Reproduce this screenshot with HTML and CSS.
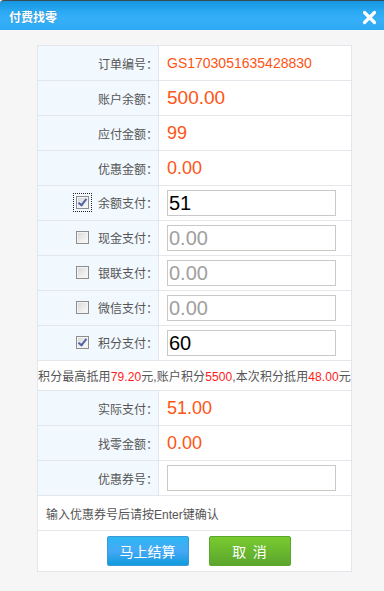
FILE: index.html
```html
<!DOCTYPE html>
<html lang="zh-CN">
<head>
<meta charset="utf-8">
<title>付费找零</title>
<link rel="stylesheet" href="styles.css">
</head>
<body>
<div class="dialog">
  <div class="titlebar">
    <span class="title">付费找零</span>
    <span class="close" aria-label="关闭">
      <svg width="15" height="15" viewBox="0 0 15 15"><path d="M2.5 2.5 L12.5 12.5 M12.5 2.5 L2.5 12.5" stroke="#ffffff" stroke-width="3.2" stroke-linecap="round" fill="none"/></svg>
    </span>
  </div>
  <div class="content">
    <table class="form">
      <colgroup><col class="c-label"><col class="c-value"></colgroup>
      <tr><th>订单编号：</th><td><span class="val v-order">GS1703051635428830</span></td></tr>
      <tr><th>账户余额：</th><td><span class="val v-big">500.00</span></td></tr>
      <tr><th>应付金额：</th><td><span class="val v-mid">99</span></td></tr>
      <tr><th>优惠金额：</th><td><span class="val v-mid">0.00</span></td></tr>
      <tr><th><span class="lab"><span class="cb checked focus"></span>余额支付：</span></th><td><input class="inp" type="text" value="51"></td></tr>
      <tr><th><span class="lab"><span class="cb"></span>现金支付：</span></th><td><input class="inp dim" type="text" value="0.00"></td></tr>
      <tr><th><span class="lab"><span class="cb"></span>银联支付：</span></th><td><input class="inp dim" type="text" value="0.00"></td></tr>
      <tr><th><span class="lab"><span class="cb"></span>微信支付：</span></th><td><input class="inp dim" type="text" value="0.00"></td></tr>
      <tr><th><span class="lab"><span class="cb checked"></span>积分支付：</span></th><td><input class="inp" type="text" value="60"></td></tr>
      <tr class="note-row"><td colspan="2" class="note">积分最高抵用<em>79.20</em>元,账户积分<em>5500</em>,本次积分抵用<em>48.00</em>元</td></tr>
      <tr><th>实际支付：</th><td><span class="val v-mid">51.00</span></td></tr>
      <tr><th>找零金额：</th><td><span class="val v-mid">0.00</span></td></tr>
      <tr><th>优惠券号：</th><td><input class="inp" type="text" value=""></td></tr>
      <tr><td colspan="2" class="hint">输入优惠券号后请按Enter键确认</td></tr>
      <tr class="btn-row"><td colspan="2"><div class="btns"><button class="btn btn-blue">马上结算</button><button class="btn btn-green">取&nbsp;&nbsp;消</button></div></td></tr>
    </table>
  </div>
</div>
</body>
</html>
```

FILE: styles.css
```css
html, body {
  margin: 0;
  padding: 0;
}
body {
  background: #f6f6f6;
  font-family: "Liberation Sans", "Noto Sans CJK SC", sans-serif;
  font-size: 12px;
  color: #555;
}
.dialog {
  width: 384px;
  height: 591px;
  background: #f6f6f6;
}
.titlebar {
  height: 30px;
  box-sizing: border-box;
  border-top: 1px solid #3a4a55;
  border-top-left-radius: 4px;
  background: linear-gradient(to bottom, #1596e0 0%, #2aa8f2 35%, #35aff8 60%, #2eaaf4 100%);
  display: flex;
  align-items: center;
  justify-content: space-between;
  padding: 0 7px 0 9px;
}
.title {
  color: #fff;
  font-weight: bold;
  font-size: 12px;
  text-shadow: 0 0 1px rgba(0,0,0,0.25);
  margin-top: 1px;
}
.close {
  display: flex;
  width: 15px;
  height: 15px;
  margin-top: 3px;
}
.content {
  padding: 15px 0 0 37px;
}
.form {
  border-collapse: collapse;
  table-layout: fixed;
  width: 314px;
  background: #fff;
}
.c-label { width: 121px; }
.c-value { width: 193px; }
.form th, .form td {
  border: 1px solid #e3e6ea;
  height: 35px;
  padding: 0;
  box-sizing: border-box;
  vertical-align: middle;
}
.form th {
  background: #f1f8fe;
  font-weight: normal;
  text-align: right;
  color: #555;
  font-size: 12px;
  white-space: nowrap;
}
.form td {
  padding-left: 8px;
  text-align: left;
}
.lab {
  display: inline-flex;
  align-items: center;
}
.cb {
  display: inline-block;
  width: 11px;
  height: 11px;
  border: 1px solid #8d8d8d;
  background: linear-gradient(135deg, #d6d6d6 0%, #eeeeee 60%, #fbfbfb 100%);
  margin-right: 9px;
  position: relative;
  box-shadow: inset 0 0 0 1px #f4f4f4;
}
.cb.checked::after {
  content: "";
  position: absolute;
  left: 3px;
  top: 0px;
  width: 3px;
  height: 7px;
  border-right: 2px solid #5062a8;
  border-bottom: 2px solid #5062a8;
  transform: rotate(38deg);
}
.cb.focus {
  outline: 1px dotted #222;
  outline-offset: 2px;
}
.val {
  color: #ff5314;
}
.v-order { font-size: 14px; }
.v-big { font-size: 19px; }
.v-mid { font-size: 18px; }
.inp {
  display: block;
  width: 169px;
  height: 26px;
  box-sizing: border-box;
  border: 1px solid #c9c9c9;
  padding: 0 0 0 1px;
  margin: 0;
  font-family: "Liberation Sans", sans-serif;
  font-size: 20px;
  color: #000;
  background: #fff;
  outline: none;
}
.inp.dim { color: #a0a0a0; }
.form td.note {
  height: 30px;
  padding: 0;
  text-align: center;
  font-size: 12px;
  color: #555;
  white-space: nowrap;
  letter-spacing: 0.1px;
}
.note em {
  font-style: normal;
  color: #ff1a1a;
}
.form td.hint {
  padding-left: 8px;
  color: #555;
  font-size: 12px;
}
.form .btn-row td {
  height: 41px;
  padding: 0 0 0 8px;
}
.btns {
  display: flex;
  justify-content: center;
  gap: 20px;
}
.btn {
  width: 82px;
  height: 30px;
  box-sizing: border-box;
  border-radius: 2px;
  color: #fff;
  font-family: "Noto Sans CJK SC", sans-serif;
  font-size: 14px;
  padding: 0;
  cursor: pointer;
}
.btn-blue {
  border: 1px solid #3d9ad6;
  background: linear-gradient(to bottom, #2db8f2 0%, #45a8f6 50%, #0f9bdd 100%);
}
.btn-green {
  border: 1px solid #5aa72a;
  background: linear-gradient(to bottom, #79ca30 0%, #6ab82e 50%, #5ba52f 100%);
}
```
